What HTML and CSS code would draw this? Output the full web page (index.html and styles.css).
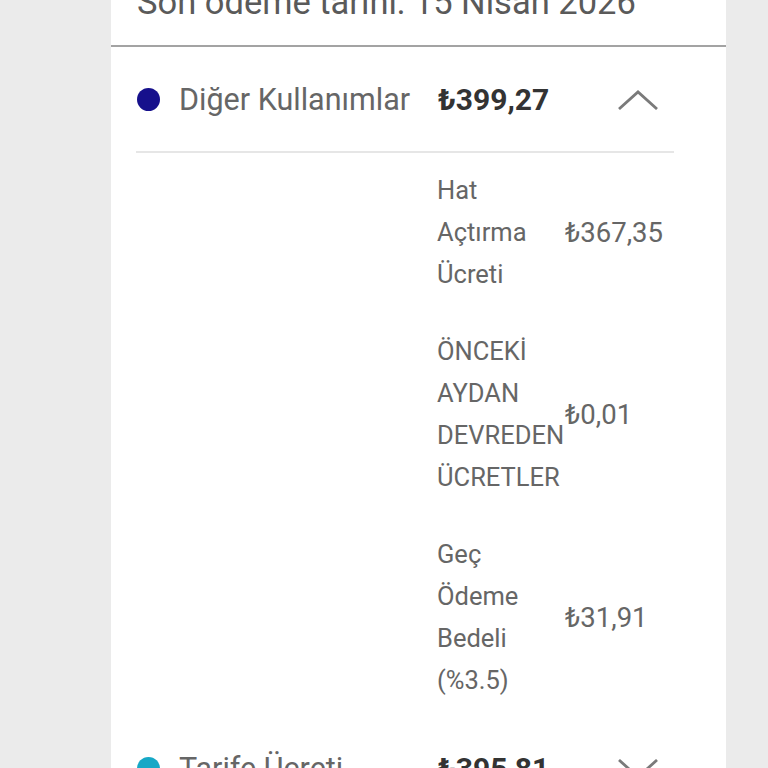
FILE: index.html
```html
<!DOCTYPE html>
<html lang="tr">
<head>
<meta charset="utf-8">
<title>Fatura Detayı</title>
<link rel="stylesheet" href="styles.css">
</head>
<body>
<div class="page">
  <section class="card">
    <header class="due">Son ödeme tarihi: 15 Nisan 2026</header>

    <div class="group">
      <div class="summary">
        <span class="dot dot-navy"></span>
        <span class="name">Diğer Kullanımlar</span>
        <span class="amount">₺399,27</span>
        <svg class="chevron" viewBox="0 0 40 20" width="40" height="20" aria-hidden="true">
          <polyline points="1,19 20,2 39,19" fill="none" stroke="#7a7a7a" stroke-width="2.8"/>
        </svg>
      </div>
      <div class="rule"></div>
      <ul class="items">
        <li class="item">
          <span class="item-name">Hat Açtırma Ücreti</span>
          <span class="item-amount">₺367,35</span>
        </li>
        <li class="item">
          <span class="item-name">ÖNCEKİ AYDAN DEVREDEN ÜCRETLER</span>
          <span class="item-amount">₺0,01</span>
        </li>
        <li class="item">
          <span class="item-name">Geç Ödeme Bedeli (%3.5)</span>
          <span class="item-amount">₺31,91</span>
        </li>
      </ul>
    </div>

    <div class="group">
      <div class="summary">
        <span class="dot dot-cyan"></span>
        <span class="name">Tarife Ücreti</span>
        <span class="amount">₺395,81</span>
        <svg class="chevron" viewBox="0 0 40 20" width="40" height="20" aria-hidden="true">
          <polyline points="1,1 20,18 39,1" fill="none" stroke="#7a7a7a" stroke-width="2.8"/>
        </svg>
      </div>
    </div>
  </section>
</div>
</body>
</html>
```

FILE: styles.css
```css
html, body {
  margin: 0;
  padding: 0;
}

body {
  background: #ebebeb;
  font-family: Roboto, "Noto Sans", "Liberation Sans", sans-serif;
  color: #666;
  overflow: hidden;
  height: 768px;
}

.page {
  padding-left: 111px;
}

.card {
  width: 615px;
  background: #fff;
  margin-top: -57px;
  min-height: 900px;
}

/* due-date line, mostly scrolled out of view */
.due {
  height: 104px;
  box-sizing: border-box;
  padding: 40px 0 0 26px;
  font-size: 34.5px;
  line-height: 38px;
  color: #5a5a5a;
  border-bottom: 2px solid #a3a3a3;
}

.summary {
  display: flex;
  align-items: center;
  height: 104px;
  padding-left: 26px;
}

.dot {
  width: 23px;
  height: 23px;
  border-radius: 50%;
  flex: none;
}

.dot-navy { background: #16108c; }
.dot-cyan { background: #16a8c6; }

.name {
  margin-left: 19px;
  width: 259px;
  font-size: 30.5px;
  color: #666;
  white-space: nowrap;
}

.amount {
  font-size: 30px;
  font-weight: 700;
  color: #333;
  width: 180px;
}

.chevron {
  margin-top: 2px;
  flex: none;
}

.rule {
  height: 2px;
  background: #e6e6e6;
  margin: 0 52px 0 25px;
}

.items {
  list-style: none;
  margin: 0;
  padding: 16px 0 15px 326px;
  display: flex;
  flex-direction: column;
  gap: 35px;
}

.item {
  display: flex;
  align-items: center;
}

.item-name {
  width: 128px;
  font-size: 25.5px;
  line-height: 42px;
  color: #666;
}

.item-amount {
  font-size: 27.5px;
  color: #666;
}
```
